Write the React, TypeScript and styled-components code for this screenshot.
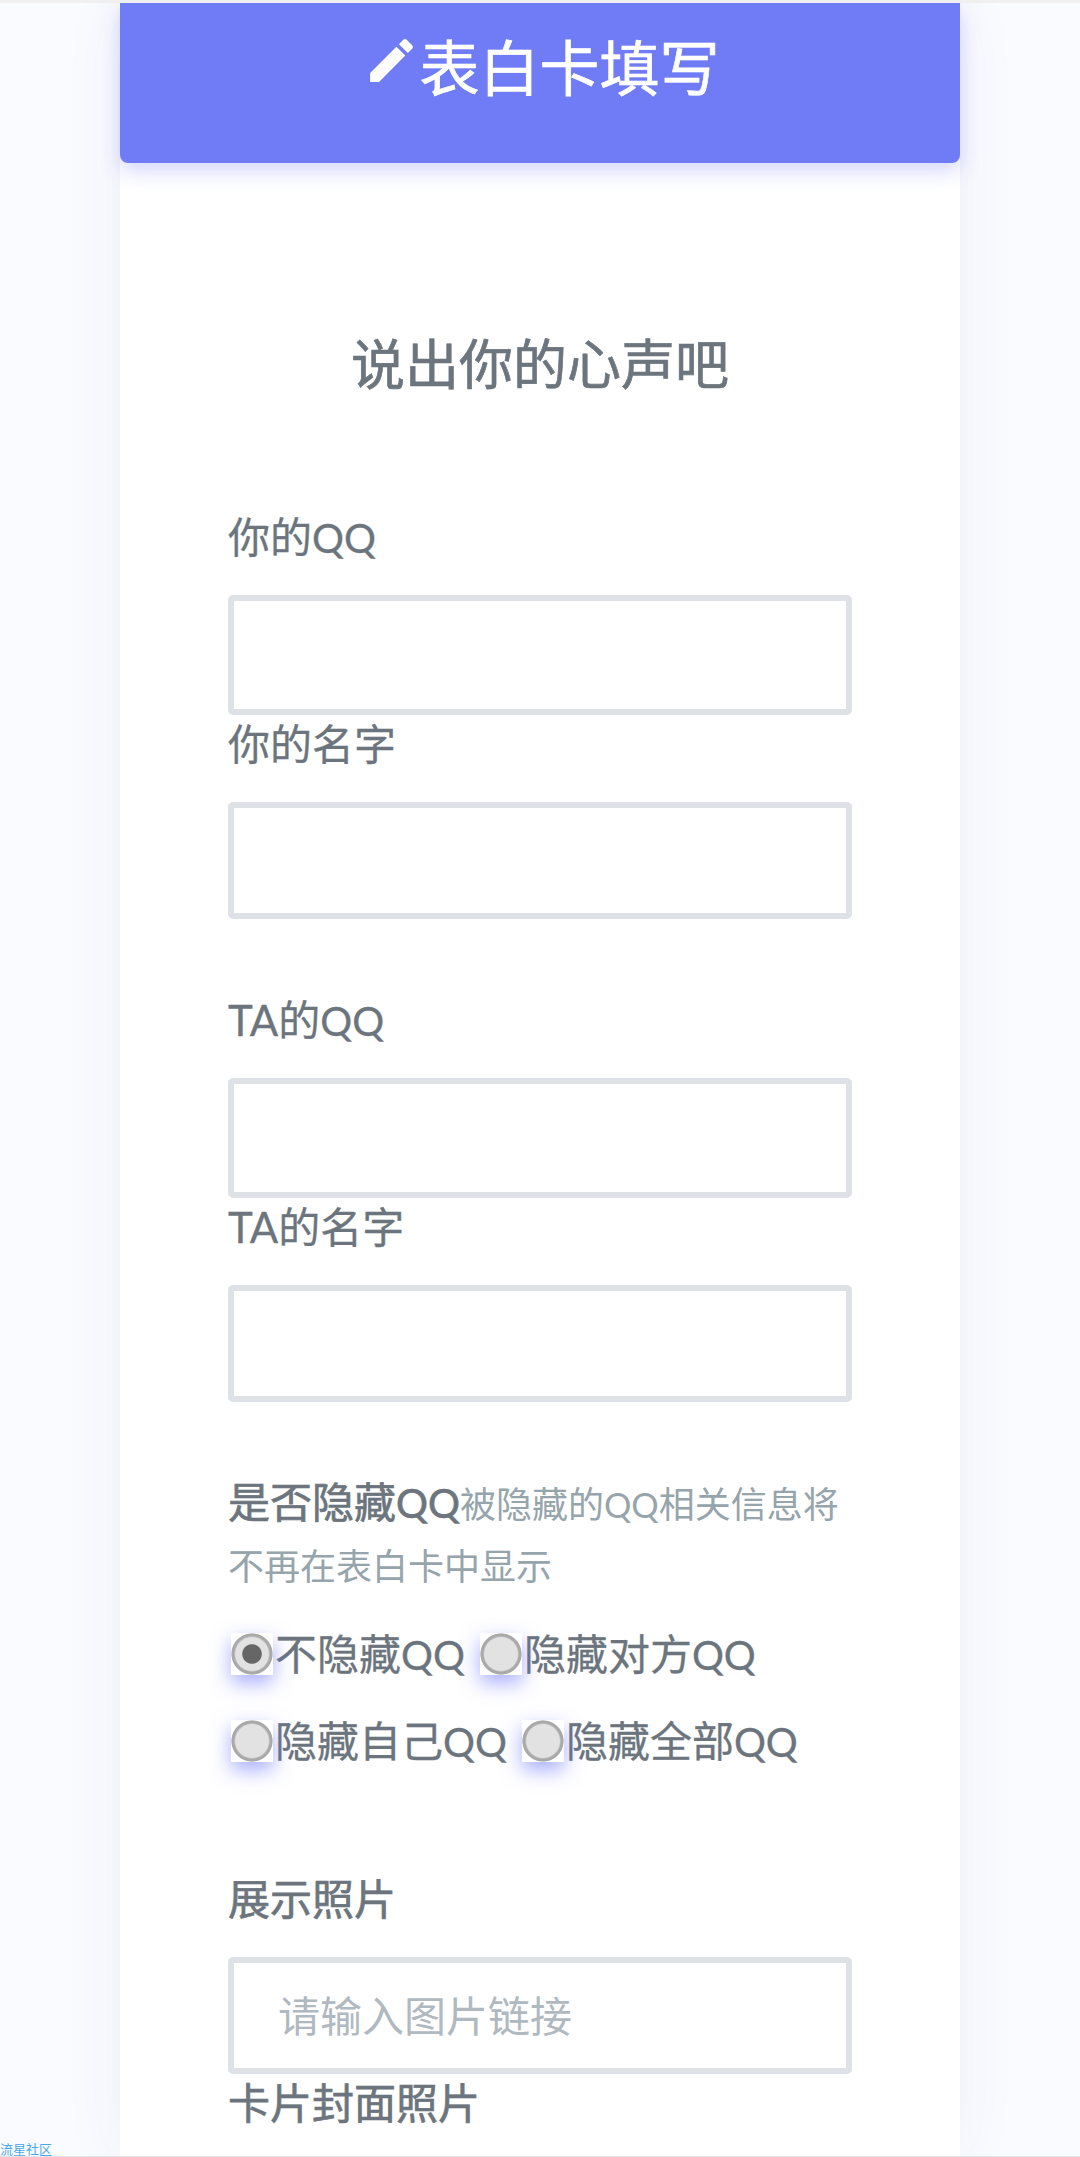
import React from "react";
import styled, {createGlobalStyle} from "styled-components";
import {MdEdit} from "react-icons/md";

const FONT = `Lato, "Noto Sans CJK SC", sans-serif`

type RadioType = {
    label: string
    checked?: boolean
}
type FieldLabelType = {
    strong?: boolean
}
type TextInputType = {
    tall?: boolean
}

const radios: Array<RadioType> = [
    {label: "不隐藏", checked: true},
    {label: "隐藏对方"},
    {label: "隐藏自己"},
    {label: "隐藏全部"},
]

export default function App() {
    return (
        <Page>
            <GlobalStyle/>
            <TopLine/>
            <Card>
                <Header>
                    <MdEdit size={57}/>
                    <HeaderTitle>表白卡填写</HeaderTitle>
                </Header>
                <Body>
                    <SectionTitle>说出你的心声吧</SectionTitle>
                    <FieldPair>
                        <FieldLabel>你的<Qq>QQ</Qq></FieldLabel>
                        <TextInput tall type="text"/>
                        <FieldLabel>你的名字</FieldLabel>
                        <TextInput type="text"/>
                    </FieldPair>
                    <FieldPair>
                        <FieldLabel>TA的<Qq>QQ</Qq></FieldLabel>
                        <TextInput tall type="text"/>
                        <FieldLabel>TA的名字</FieldLabel>
                        <TextInput type="text"/>
                    </FieldPair>
                    <HideBlock>
                        <HideTitle>
                            是否隐藏<Qq>QQ</Qq>
                            <HideHint>被隐藏的<Qq>QQ</Qq>相关信息将不再在表白卡中显示</HideHint>
                        </HideTitle>
                        <RadioGroup>
                            {radios.map(radio => (
                                <RadioLabel key={radio.label}>
                                    <RadioInput type="radio" name="hide" defaultChecked={radio.checked}/>
                                    <span>{radio.label}<Qq>QQ</Qq></span>
                                </RadioLabel>
                            ))}
                        </RadioGroup>
                    </HideBlock>
                    <div>
                        <FieldLabel strong>展示照片</FieldLabel>
                        <TextInput type="text" placeholder="请输入图片链接"/>
                        <FieldLabel strong>卡片封面照片</FieldLabel>
                    </div>
                </Body>
            </Card>
            <FooterLink>流星社区</FooterLink>
            <BottomLine/>
        </Page>
    )
}

const GlobalStyle = createGlobalStyle`
  html, body {
    margin: 0;
    padding: 0;
    height: 2157px;
    overflow: hidden;
    background: #fafbff;
  }
  * {
    box-sizing: border-box;
  }
`
const Page = styled.div`
  position: relative;
  height: 2157px;
  overflow: hidden;
  font-family: ${FONT};
  color: #6c757d;
  background: #fafbff;
`
const TopLine = styled.div`
  height: 3px;
  background: #f0f0f0;
  position: relative;
  z-index: 2;
`
const Card = styled.div`
  width: 840px;
  min-height: 2154px;
  margin: 0 auto;
  background: #ffffff;
  box-shadow: 0 0 60px rgba(60, 70, 120, 0.06);
`
const Header = styled.div`
  height: 160px;
  padding: 21px 0 0 2px;
  display: flex;
  justify-content: center;
  align-items: flex-start;
  color: #ffffff;
  background: #707cf6;
  border-radius: 0 0 8px 8px;
  box-shadow: 0 8px 20px rgba(112, 124, 246, 0.3);

  svg {
    margin-top: 8px;
  }
`
const HeaderTitle = styled.div`
  font-size: 60px;
  line-height: 88px;
  font-weight: 400;
  -webkit-text-stroke: 0.7px currentColor;
`
const Body = styled.div`
  padding: 161px 108px 0;
`
const SectionTitle = styled.div`
  font-size: 54px;
  line-height: 81px;
  font-weight: 400;
  -webkit-text-stroke: 0.7px currentColor;
  text-align: center;
  margin-bottom: 103px;
`
const FieldPair = styled.div`
  margin-bottom: 72px;
`
const FieldLabel = styled.div<FieldLabelType>`
  font-size: 42px;
  line-height: 58px;
  margin-bottom: 29px;
  -webkit-text-stroke: ${props => props.strong ? '0.7px' : '0.3px'} currentColor;
`
const Qq = styled.span`
  font-size: 0.95em;
  line-height: 1;
`
const TextInput = styled.input<TextInputType>`
  display: block;
  width: 624px;
  height: ${props => props.tall ? '120px' : '117px'};
  padding: 0 44px;
  font-family: ${FONT};
  font-size: 42px;
  color: #495057;
  background: #ffffff;
  border: 6px solid #dee2e6;
  border-radius: 5px;
  outline: none;

  &::placeholder {
    color: #b1b9c0;
    opacity: 1;
  }
`
const HideBlock = styled.div`
  margin: -3px 0 100px;
`
const HideTitle = styled.div`
  font-size: 42px;
  line-height: 62px;
  -webkit-text-stroke: 0.7px currentColor;
`
const HideHint = styled.span`
  font-size: 36px;
  line-height: 1;
  color: #96a4ab;
  -webkit-text-stroke: 0;
`
const RadioGroup = styled.div`
  margin-top: 25px;
  display: flex;
  flex-wrap: wrap;
  column-gap: 12px;
  row-gap: 24px;
`
const RadioLabel = styled.label`
  display: flex;
  align-items: center;
  height: 63px;
  font-size: 42px;
  -webkit-text-stroke: 0.3px currentColor;
`
const RadioInput = styled.input`
  appearance: none;
  flex: none;
  width: 42px;
  height: 42px;
  margin: 0 2px 0 3px;
  position: relative;
  top: 2px;
  background: radial-gradient(circle closest-side, #e2e2e2 0 78%, #a9a9a9 86% 96%, #ffffff 100%);
  box-shadow: 0 8px 20px rgba(96, 106, 255, 0.55);

  &:checked {
    background: radial-gradient(circle closest-side, #666666 0 44%, #e2e2e2 49% 78%, #a9a9a9 86% 96%, #ffffff 100%);
  }
`
const FooterLink = styled.a`
  position: absolute;
  left: 0;
  bottom: 1px;
  font-size: 13px;
  line-height: 14px;
  color: #4aa8ef;
`
const BottomLine = styled.div`
  position: absolute;
  left: 0;
  right: 0;
  bottom: 0;
  height: 1px;
  background: #e6e6e6;
`
